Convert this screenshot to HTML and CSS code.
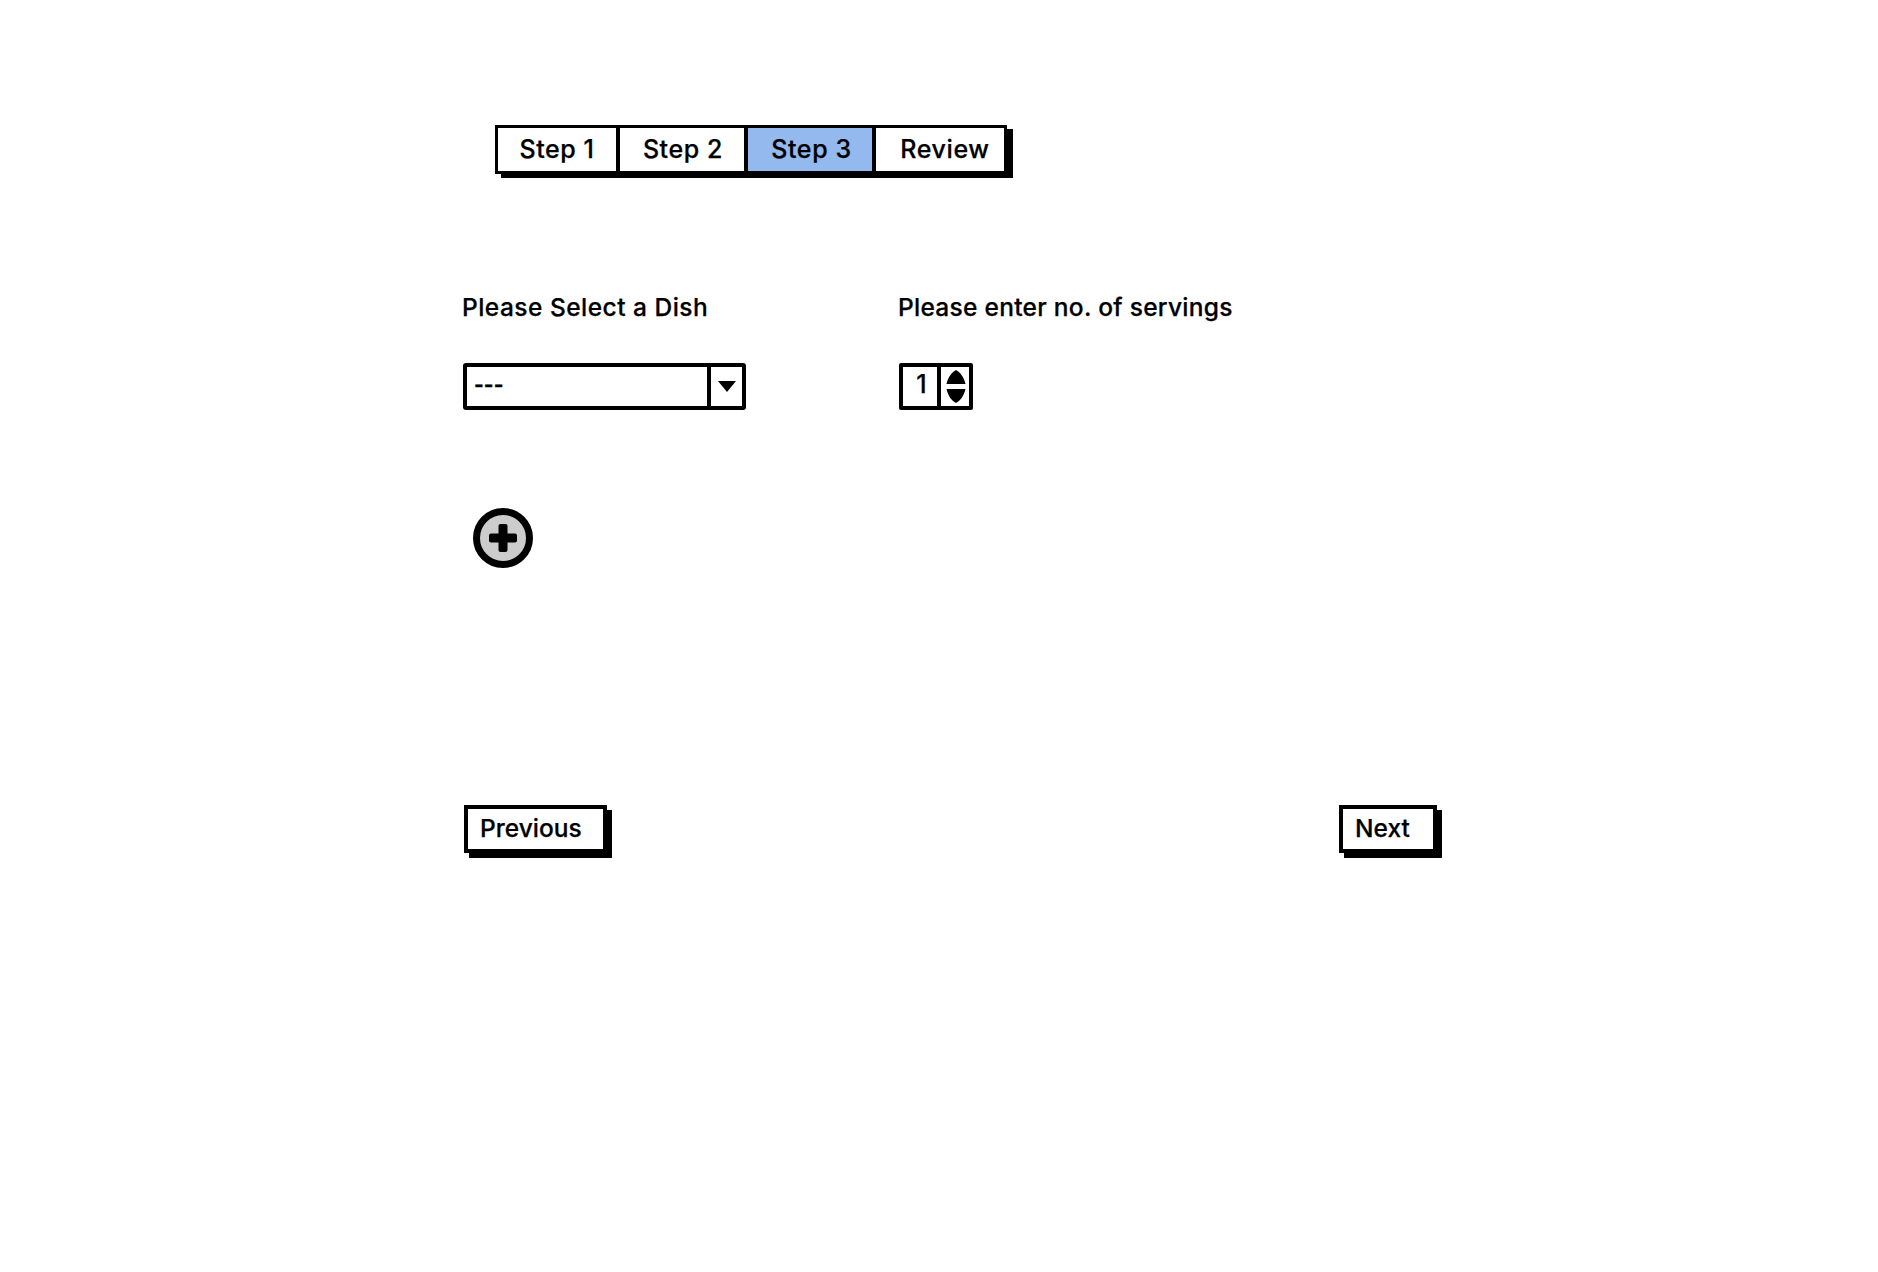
FILE: index.html
```html
<!DOCTYPE html>
<html lang="en">
<head>
<meta charset="utf-8">
<title>Step 3</title>
<link rel="stylesheet" href="styles.css">
</head>
<body>
<main class="page">
  <nav class="tabs">
    <a class="tab tab-1">Step 1</a>
    <a class="tab tab-2">Step 2</a>
    <a class="tab tab-3 active">Step 3</a>
    <a class="tab tab-4">Review</a>
  </nav>
  <section class="fields">
    <div class="field field-dish">
      <label class="label label-dish">Please Select a Dish</label>
      <div class="select">
        <span class="select-value">---</span>
        <span class="select-btn">
          <svg width="18" height="11" viewBox="0 0 18 11"><path d="M0 0H18L9 11Z" fill="#000"/></svg>
        </span>
      </div>
    </div>
    <div class="field">
      <label class="label">Please enter no. of servings</label>
      <div class="spinner">
        <span class="spinner-value">1</span>
        <span class="spinner-btn">
          <svg width="20" height="33" viewBox="0 0 20 33"><path d="M10 0C14 2 18 7 19.500 14H.5C2 7 6 2 10 0Z M.5 19H19.500C18 26 14 31 10 33C6 31 2 26 .5 19Z" fill="#000"/></svg>
        </span>
      </div>
    </div>
  </section>
  <button class="add" aria-label="Add">
    <svg width="60" height="60" viewBox="0 0 60 60"><circle cx="30" cy="30" r="26.500" fill="#ccc" stroke="#000" stroke-width="7"/><rect x="16" y="25.500" width="28" height="9" rx="2" fill="#000"/><rect x="25.500" y="16" width="9" height="28" rx="2" fill="#000"/></svg>
  </button>
  <footer class="actions">
    <button class="btn btn-prev">Previous</button>
    <button class="btn btn-next">Next</button>
  </footer>
</main>
</body>
</html>
```
FILE: styles.css
```css
* { box-sizing: border-box; }
html, body { margin: 0; background: #fff; }
body { font-family: "Inter", "Liberation Sans", sans-serif; color: #000; -webkit-text-stroke: 0.25px #000; }
.page { width: 1878px; height: 1272px; padding: 125px 0 0 462px; }

.tabs { display: flex; width: 512px; height: 49px; margin-left: 33px; border: 3px solid #000; box-shadow: 6px 4px 0 #000; font-size: 25px; font-weight: 500; letter-spacing: 0.6px; }
.tab { display: flex; align-items: center; justify-content: center; padding-bottom: 2px; background: #fff; border-right: 4px solid #000; }
.tab-1 { width: 122px; }
.tab-2 { width: 128px; padding-left: 2px; }
.tab-3 { width: 128px; padding-left: 3px; }
.tab-4 { flex: 1; border-right: 0; padding-left: 10px; }
.active { background: #94b9ef; }

.fields { display: flex; margin-top: 117px; }
.field-dish { width: 436px; }
.label { display: block; height: 32px; font-size: 24.500px; line-height: 32px; font-weight: 500; letter-spacing: 0.28px; white-space: nowrap; }
.label-dish { letter-spacing: 0.48px; }

.select { display: flex; width: 283px; height: 47px; margin-top: 40px; margin-left: 1px; border: 4px solid #000; border-radius: 3px; }
.select-value { flex: 1; padding-left: 7px; font-size: 21px; line-height: 35px; font-weight: 700; }
.select-btn { display: flex; align-items: center; justify-content: center; width: 35px; border-left: 4px solid #000; }

.spinner { display: flex; width: 74px; height: 47px; margin-top: 40px; margin-left: 1px; border: 4px solid #000; border-radius: 2px; }
.spinner-value { flex: 1; text-align: center; padding-left: 3px; font-size: 25px; line-height: 34px; font-weight: 500; }
.spinner-btn { display: flex; align-items: center; justify-content: center; width: 32px; padding-left: 1px; border-left: 4px solid #000; }

.add { display: block; width: 60px; height: 60px; margin: 98px 0 0 11px; padding: 0; border: 0; background: none; }
.add svg { display: block; }

.actions { display: flex; justify-content: space-between; width: 973px; margin-top: 237px; margin-left: 2px; }
.btn { height: 48px; padding: 0 0 2px 12px; text-align: left; background: #fff; border: 4px solid #000; box-shadow: 5px 5px 0 #000; font: 500 24.500px "Inter", "Liberation Sans", sans-serif; color: #000; }
.btn-prev { width: 143px; }
.btn-next { width: 98px; }
```
